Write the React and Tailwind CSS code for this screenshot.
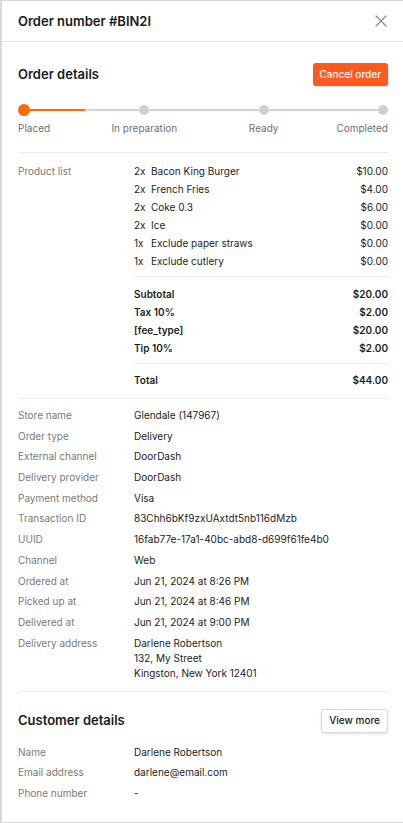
import React from 'react';

const products = [
  { qty: '2x', name: 'Bacon King Burger', price: '$10.00' },
  { qty: '2x', name: 'French Fries', price: '$4.00' },
  { qty: '2x', name: 'Coke 0.3', price: '$6.00' },
  { qty: '2x', name: 'Ice', price: '$0.00' },
  { qty: '1x', name: 'Exclude paper straws', price: '$0.00' },
  { qty: '1x', name: 'Exclude cutlery', price: '$0.00' },
];

const totals = [
  { label: 'Subtotal', value: '$20.00' },
  { label: 'Tax 10%', value: '$2.00' },
  { label: '[fee_type]', value: '$20.00' },
  { label: 'Tip 10%', value: '$2.00' },
];

const info = [
  ['Store name', 'Glendale (147967)'],
  ['Order type', 'Delivery'],
  ['External channel', 'DoorDash'],
  ['Delivery provider', 'DoorDash'],
  ['Payment method', 'Visa'],
  ['Transaction ID', '83Chh6bKf9zxUAxtdt5nb116dMzb'],
  ['UUID', '16fab77e-17a1-40bc-abd8-d699f61fe4b0'],
  ['Channel', 'Web'],
  ['Ordered at', 'Jun 21, 2024 at 8:26 PM'],
  ['Picked up at', 'Jun 21, 2024 at 8:46 PM'],
  ['Delivered at', 'Jun 21, 2024 at 9:00 PM'],
];

const customer = [
  ['Name', 'Darlene Robertson'],
  ['Email address', 'darlene@email.com'],
  ['Phone number', '-'],
];

const InfoRow = ({ label, children }) => (
  <div className="flex">
    <div className="w-[116px] shrink-0 text-[#7a7a7a]">{label}</div>
    <div className="flex-1 text-[#1c1c1c]">{children}</div>
  </div>
);

const App = () => {
  return (
    <div
      className="w-[403px] h-[823px] bg-white border-l-2 border-t border-b border-[#dadada] text-[10px] leading-[15px] overflow-hidden"
      style={{ fontFamily: 'Inter, "Noto Sans", sans-serif' }}
    >
      {/* Header */}
      <div className="h-[41px] flex items-center justify-between pl-4 pr-[15px] border-b border-[#e6e6e6]">
        <h1 className="text-[13px] font-semibold text-[#1a1a1a]">Order number #BIN2I</h1>
        <svg width="12" height="12" viewBox="0 0 12 12" className="mr-[1px]">
          <path d="M1 1L11 11M11 1L1 11" stroke="#8a8a8a" strokeWidth="1.2" strokeLinecap="round" />
        </svg>
      </div>

      <div className="pl-4 pr-[15px]">
        {/* Order details */}
        <div className="flex items-center justify-between mt-[21px] h-[23px]">
          <h2 className="text-[13px] font-semibold text-[#1a1a1a]">Order details</h2>
          <button className="h-[23px] px-[7px] rounded-[3px] bg-[#fc5a1e] text-white text-[10px] font-medium shadow-sm">
            Cancel order
          </button>
        </div>

        {/* Stepper */}
        <div className="flex items-center mt-[18px] h-3">
          <div className="w-3 h-3 rounded-full bg-[#fa6a0a] shrink-0" />
          <div className="flex-1 flex">
            <div className="flex-1 h-[2px] bg-[#fa6a0a]" />
            <div className="flex-1 h-[2px] bg-[#d4d4d4]" />
          </div>
          <div className="w-[10px] h-[10px] rounded-full bg-[#cfcfcf] shrink-0" />
          <div className="flex-1 h-[2px] bg-[#d4d4d4]" />
          <div className="w-[10px] h-[10px] rounded-full bg-[#cfcfcf] shrink-0" />
          <div className="flex-1 h-[2px] bg-[#d4d4d4]" />
          <div className="w-[10px] h-[10px] rounded-full bg-[#cfcfcf] shrink-0" />
        </div>
        <div className="flex mt-[5px] text-[#6f6f6f] whitespace-nowrap">
          <div className="w-3 shrink-0 flex justify-start">Placed</div>
          <div className="flex-1" />
          <div className="w-[10px] shrink-0 flex justify-center">In preparation</div>
          <div className="flex-1" />
          <div className="w-[10px] shrink-0 flex justify-center">Ready</div>
          <div className="flex-1" />
          <div className="w-[10px] shrink-0 flex justify-end">Completed</div>
        </div>

        <div className="border-t border-[#ececec] mt-[16px]" />

        {/* Product list */}
        <div className="flex pt-[11px] pb-[10px]">
          <div className="w-[116px] shrink-0 text-[#7a7a7a]">Product list</div>
          <div className="flex-1 text-[#1c1c1c]">
            <div className="flex flex-col gap-[3px]">
              {products.map((p) => (
                <div key={p.name} className="flex justify-between">
                  <span>
                    <span className="inline-block w-[17px]">{p.qty}</span>
                    {p.name}
                  </span>
                  <span>{p.price}</span>
                </div>
              ))}
            </div>
            <div className="border-t border-[#ececec] mt-[7px] pt-[10px] flex flex-col gap-[3px] font-semibold">
              {totals.map((t) => (
                <div key={t.label} className="flex justify-between">
                  <span>{t.label}</span>
                  <span>{t.value}</span>
                </div>
              ))}
            </div>
            <div className="border-t border-[#ececec] mt-[7px] pt-[9px] flex justify-between font-semibold">
              <span>Total</span>
              <span>$44.00</span>
            </div>
          </div>
        </div>

        <div className="border-t border-[#ececec]" />

        {/* Order info */}
        <div className="flex flex-col gap-[5.7px] pt-[9px] pb-[10px]">
          {info.map(([label, value]) => (
            <InfoRow key={label} label={label}>{value}</InfoRow>
          ))}
          <InfoRow label="Delivery address">
            <div>Darlene Robertson</div>
            <div>132, My Street</div>
            <div>Kingston, New York 12401</div>
          </InfoRow>
        </div>

        <div className="border-t border-[#ececec]" />

        {/* Customer details */}
        <div className="flex items-center justify-between mt-[17px] h-[24px]">
          <h2 className="text-[13px] font-semibold text-[#1a1a1a]">Customer details</h2>
          <button className="h-[24px] px-[7px] rounded-[3px] bg-white border border-[#d9d9d9] text-[#1c1c1c] text-[10px] font-medium shadow-sm">
            View more
          </button>
        </div>

        <div className="flex flex-col gap-[5.7px] mt-[12px]">
          {customer.map(([label, value]) => (
            <InfoRow key={label} label={label}>{value}</InfoRow>
          ))}
        </div>
      </div>
    </div>
  );
};

export default App;
